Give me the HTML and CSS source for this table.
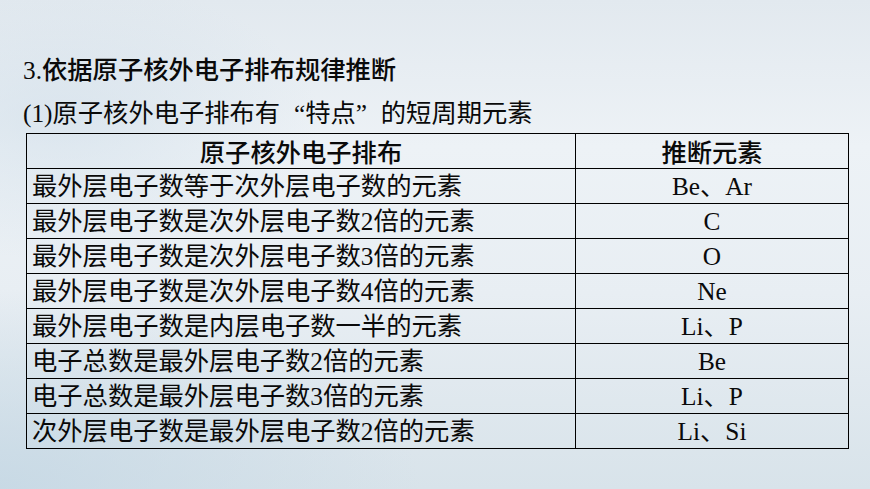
FILE: index.html
```html
<!DOCTYPE html>
<html lang="zh-CN">
<head>
<meta charset="utf-8">
<link rel="stylesheet" href="styles.css">
</head>
<body>
<div class="page">
  <div class="h1"><span class="num">3.</span>依据原子核外电子排布规律推断</div>
  <div class="h2">(1)原子核外电子排布有<span class="q ql">“</span>特点<span class="q qr">”</span>的短周期元素</div>
  <table class="tbl">
    <tr class="head"><th class="c1">原子核外电子排布</th><th class="c2">推断元素</th></tr>
    <tr><td class="c1">最外层电子数等于次外层电子数的元素</td><td class="c2">Be、Ar</td></tr>
    <tr><td class="c1">最外层电子数是次外层电子数2倍的元素</td><td class="c2">C</td></tr>
    <tr><td class="c1">最外层电子数是次外层电子数3倍的元素</td><td class="c2">O</td></tr>
    <tr><td class="c1">最外层电子数是次外层电子数4倍的元素</td><td class="c2">Ne</td></tr>
    <tr><td class="c1">最外层电子数是内层电子数一半的元素</td><td class="c2">Li、P</td></tr>
    <tr><td class="c1">电子总数是最外层电子数2倍的元素</td><td class="c2">Be</td></tr>
    <tr><td class="c1">电子总数是最外层电子数3倍的元素</td><td class="c2">Li、P</td></tr>
    <tr><td class="c1">次外层电子数是最外层电子数2倍的元素</td><td class="c2">Li、Si</td></tr>
  </table>
</div>
</body>
</html>
```

FILE: styles.css
```css
html, body {
  margin: 0;
  padding: 0;
}
body {
  width: 870px;
  height: 489px;
  overflow: hidden;
  font-family: "Liberation Serif", "Noto Sans CJK SC", serif;
  color: #0a0a0a;
  background:
    radial-gradient(ellipse 260px 140px at 60px 120px, rgba(205,220,232,0.55), rgba(205,220,232,0) 100%),
    radial-gradient(ellipse 420px 200px at 0px 489px, rgba(196,215,228,0.8), rgba(196,215,228,0) 100%),
    linear-gradient(180deg, #e2e9ef 0%, #edf2f6 30%, #e8eef3 60%, #d8e3ea 100%);
}
.page {
  padding: 48px 0 0 23px;
}
.h1 {
  font-size: 25.3px;
  line-height: 40px;
  height: 40px;
  font-weight: 500;
  font-family: "Noto Sans CJK SC", sans-serif;
}
.h1 .num {
  font-family: "Liberation Serif", serif;
  font-weight: 400;
}
.h2 {
  margin-top: 5px;
  font-size: 25.3px;
  line-height: 40px;
  height: 40px;
}
.q {
  display: inline-block;
  width: 25px;
  font-family: "Liberation Serif", serif;
}
.ql { text-align: right; }
.qr { text-align: left; }
.tbl {
  margin-left: 3px;
  border-collapse: collapse;
  width: 823px;
  border: 1.5px solid #000;
  font-size: 25.3px;
}
.tbl th, .tbl td {
  border: 1.5px solid #000;
  height: 34px;
  padding: 0;
  line-height: 34px;
  white-space: nowrap;
}
.tbl th {
  font-weight: 500;
  font-family: "Noto Sans CJK SC", sans-serif;
}
.tbl .c1 {
  width: 543px;
  text-align: left;
  padding-left: 5px;
}
.tbl th.c1 {
  width: 548px;
  text-align: center;
  padding-left: 0;
}
.tbl .c2 {
  text-align: center;
}
```
